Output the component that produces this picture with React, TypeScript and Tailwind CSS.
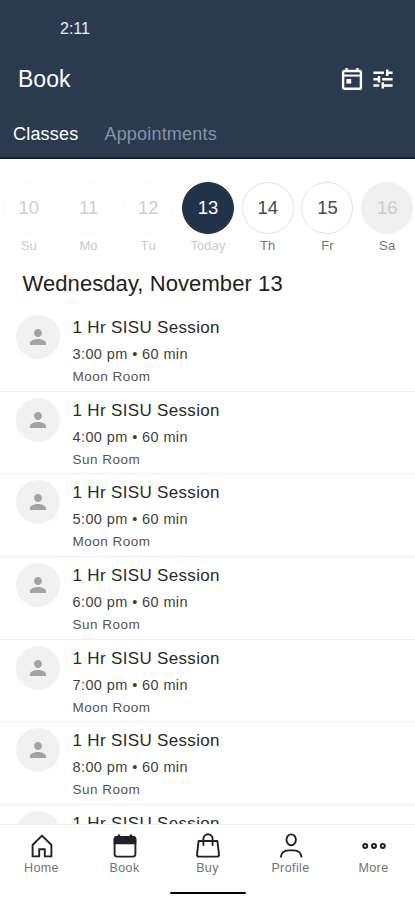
import type { ReactNode } from "react";
import { MdPerson } from "react-icons/md";

interface Day {
  date: number;
  label: string;
  state: "past" | "selected" | "open" | "closed";
}

interface Session {
  time?: string;
  room?: string;
}

const days: Day[] = [
  { date: 10, label: "Su", state: "past" },
  { date: 11, label: "Mo", state: "past" },
  { date: 12, label: "Tu", state: "past" },
  { date: 13, label: "Today", state: "selected" },
  { date: 14, label: "Th", state: "open" },
  { date: 15, label: "Fr", state: "open" },
  { date: 16, label: "Sa", state: "closed" },
];

const sessions: Session[] = [
  { time: "3:00 pm", room: "Moon Room" },
  { time: "4:00 pm", room: "Sun Room" },
  { time: "5:00 pm", room: "Moon Room" },
  { time: "6:00 pm", room: "Sun Room" },
  { time: "7:00 pm", room: "Moon Room" },
  { time: "8:00 pm", room: "Sun Room" },
  {},
];

const circleStyles = {
  past: "border-[#fcfcfc] text-[#cfcfcf]",
  selected: "border-[#1f3149] bg-[#22344c] text-white",
  open: "border-[#e4e4e4] text-[#4a4a4a]",
  closed: "border-[#f0f0f0] bg-[#f0f0f0] text-[#cdcdcd]",
};

const labelStyles = {
  past: "text-[#cbcbcb]",
  selected: "text-[#cbcbcb]",
  open: "text-[#777777]",
  closed: "text-[#777777]",
};

function TodayIcon() {
  return (
    <svg width="22" height="24" viewBox="0 0 22 24" fill="none" stroke="white">
      <path d="M5.6 1v4M16.4 1v4" strokeWidth="2.2" />
      <rect x="2.1" y="4" width="17.8" height="17.8" rx="1.4" strokeWidth="2.4" />
      <path d="M2 8.6h18" strokeWidth="2" />
      <rect x="5.4" y="12" width="4.8" height="4.6" fill="white" stroke="none" />
    </svg>
  );
}

function TuneIcon() {
  return (
    <svg
      width="24"
      height="24"
      viewBox="0 0 24 24"
      fill="none"
      stroke="white"
      strokeWidth="2.5"
    >
      <path d="M2.4 5.8H13M16.2 5.8h5.4M16.2 2.6V9" />
      <path d="M2.4 12.2H8M8 9v6.4M11.2 12.2h10.4" />
      <path d="M2.4 18.4h5.8M11.8 18.4h9.8M11.8 15.2v6.4" />
    </svg>
  );
}

function HomeIcon() {
  return (
    <path d="M4.6 12 14 2.6l9.4 9.4v11.4h-6.6v-7.2h-5.6v7.2H4.6z" />
  );
}

function BookIcon() {
  return (
    <>
      <rect x="3.6" y="4" width="20.8" height="19.6" rx="2.6" />
      <path d="M3.6 10.2V6.4A2.4 2.4 0 0 1 6 4h16a2.4 2.4 0 0 1 2.4 2.4v3.8z" fill="currentColor" />
      <path d="M8 1.4v3M20 1.4v3" strokeWidth="2.4" />
    </>
  );
}

function BuyIcon() {
  return (
    <>
      <path d="M4.6 8h18.8l1.6 13.6a1.8 1.8 0 0 1-1.8 2H4.8a1.8 1.8 0 0 1-1.8-2z" />
      <path d="M9.4 12.8V5.8a4.6 4.6 0 0 1 9.2 0v7" />
    </>
  );
}

function ProfileIcon() {
  return (
    <>
      <ellipse cx="14.2" cy="6.8" rx="4.7" ry="5.4" />
      <path d="M3.8 24.6c0-4.4 3.4-7.2 7.4-7.2h6c4 0 7.4 2.8 7.4 7.2" />
    </>
  );
}

function MoreIcon() {
  return (
    <g strokeWidth="2">
      <circle cx="5.2" cy="13" r="2" />
      <circle cx="14" cy="13" r="2" />
      <circle cx="22.8" cy="13" r="2" />
    </g>
  );
}

function SessionRow({ time, room }: Session) {
  return (
    <div className="flex h-[82.7px] border-b border-[#f2f2f2] pt-[6px] pl-4">
      <div className="flex size-11 shrink-0 items-center justify-center rounded-full bg-[#f1f1f1]">
        <MdPerson className="size-6 text-[#a3a3a3]" />
      </div>
      <div className="pt-px pl-[12.5px]">
        <div className="text-[17px] leading-6 tracking-[0.33px] text-[#2a2a2a]">
          1 Hr SISU Session
        </div>
        {time && (
          <div className="mt-1 text-[14.5px] leading-5 tracking-[0.4px] text-[#3f3f3f]">
            {time} • 60 min
          </div>
        )}
        {room && (
          <div className="mt-[3px] text-[13.5px] leading-5 tracking-[0.5px] text-[#555555]">
            {room}
          </div>
        )}
      </div>
    </div>
  );
}

function NavItem({ label, children }: { label: string; children: ReactNode }) {
  return (
    <div className="flex flex-1 flex-col items-center">
      <svg
        width="28"
        height="26"
        viewBox="0 0 28 26"
        fill="none"
        stroke="currentColor"
        strokeWidth="1.9"
        strokeLinejoin="round"
        className="text-[#20202a]"
      >
        {children}
      </svg>
      <span className="mt-px text-[12.5px] leading-4 tracking-[0.4px] text-[#737373]">
        {label}
      </span>
    </div>
  );
}

export default function App() {
  return (
    <div className="flex h-[900px] w-[415px] flex-col overflow-hidden bg-white font-['Liberation_Sans',Arial,sans-serif]">
      <header className="flex h-[159px] shrink-0 flex-col border-b-2 border-[#171b43] bg-[#2a3b50] text-white">
        <div className="pt-[19px] pl-[60px] text-[16px] leading-5 text-[#e8edf5]">
          2:11
        </div>
        <div className="mt-6 flex h-8 items-center justify-between pr-5 pl-[18px]">
          <h1 className="text-[23px] leading-8">Book</h1>
          <div className="flex items-center gap-2">
            <TodayIcon />
            <TuneIcon />
          </div>
        </div>
        <div className="mt-[27px] flex gap-[26px] pl-[13px] text-[18px] leading-6 tracking-[0.2px]">
          <span>Classes</span>
          <span className="text-[#8594a7]">Appointments</span>
        </div>
      </header>

      <div className="-ml-px flex w-[418px] shrink-0 pt-[23px]">
        {days.map((day) => (
          <div key={day.date} className="flex flex-1 flex-col items-center">
            <div
              className={`flex size-[52px] items-center justify-center rounded-full border text-[18.5px] ${circleStyles[day.state]}`}
            >
              {day.date}
            </div>
            <span
              className={`mt-1 text-[13px] leading-4 tracking-[0.1px] ${labelStyles[day.state]}`}
            >
              {day.label}
            </span>
          </div>
        ))}
      </div>

      <h2 className="mt-[16px] shrink-0 pl-[22.5px] text-[22px] leading-7 tracking-[0.08px] text-[#222222]">
        Wednesday, November 13
      </h2>

      <main className="mt-[11px] min-h-0 flex-1 overflow-hidden">
        {sessions.map((session, index) => (
          <SessionRow key={index} {...session} />
        ))}
      </main>

      <nav className="flex h-[76px] shrink-0 flex-col border-t border-[#f2f2f2] bg-white">
        <div className="flex pt-[8px]">
          <NavItem label="Home">
            <HomeIcon />
          </NavItem>
          <NavItem label="Book">
            <BookIcon />
          </NavItem>
          <NavItem label="Buy">
            <BuyIcon />
          </NavItem>
          <NavItem label="Profile">
            <ProfileIcon />
          </NavItem>
          <NavItem label="More">
            <MoreIcon />
          </NavItem>
        </div>
        <div className="mx-auto mt-auto mb-[6px] h-[2px] w-[76px] rounded-full bg-black" />
      </nav>
    </div>
  );
}
